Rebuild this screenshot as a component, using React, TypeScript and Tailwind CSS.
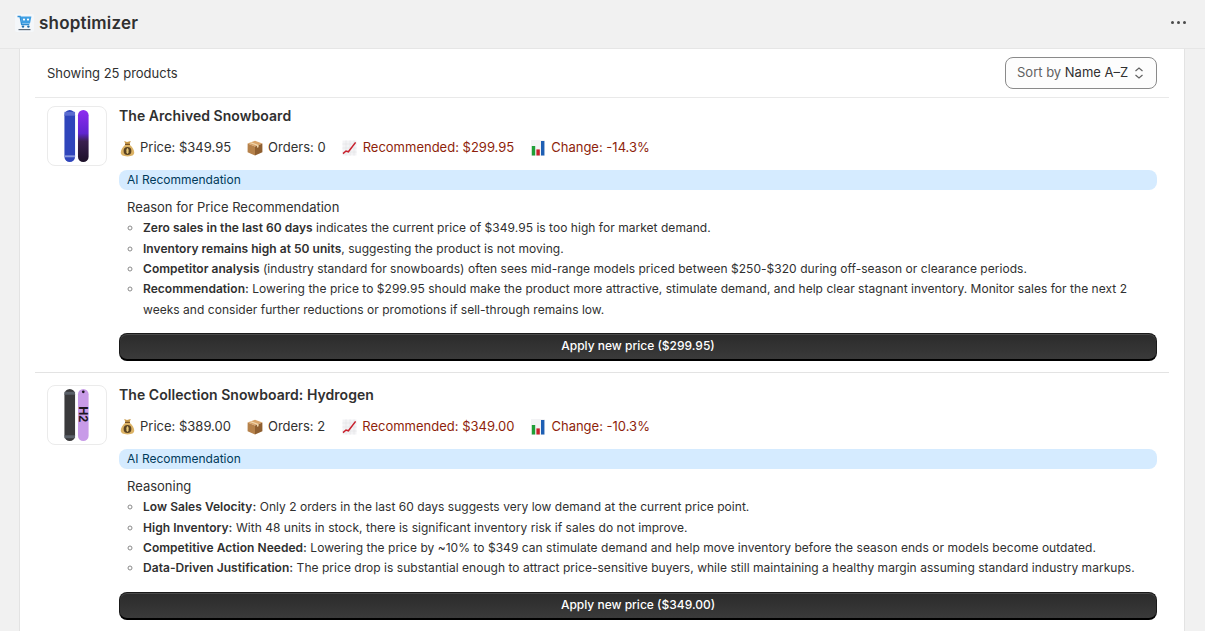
import React from "react";

const Bag = () => (
  <svg width="15" height="17" viewBox="0 0 15 17" className="shrink-0">
    <path d="M4.2 1 L7 2 L10.8 1 L9.4 4.4 L5.6 4.4 Z" fill="#c99a4a" />
    <path d="M5.5 4.6 C2.5 7 .8 10 .8 12.6 C.8 15.2 3 16.4 7.5 16.4 C12 16.4 14.2 15.2 14.2 12.6 C14.2 10 12.5 7 9.5 4.6 Z" fill="#dcb366" />
    <rect x="5" y="3.8" width="5" height="1.2" fill="#7a5426" />
    <circle cx="7.5" cy="11" r="3.9" fill="#5a4322" />
    <rect x="6.9" y="8.3" width="1.2" height="5.4" fill="#e8c878" />
    <rect x="6" y="9.6" width="3" height="1" fill="#e8c878" />
    <rect x="6" y="11.5" width="3" height="1" fill="#e8c878" />
  </svg>
);

const Box = () => (
  <svg width="16" height="16" viewBox="0 0 16 16" className="shrink-0">
    <path d="M8 .8 L15.4 3.6 L8 6.6 L.6 3.6 Z" fill="#d9a469" />
    <path d="M.6 3.6 L8 6.6 L8 15.4 L.6 12.2 Z" fill="#b5814a" />
    <path d="M15.4 3.6 L8 6.6 L8 15.4 L15.4 12.2 Z" fill="#8f5f30" />
    <path d="M4 2.2 L11.6 5 L11.6 7.2 L10 7.8 L10 5.7 L2.6 2.9 Z" fill="#efd6ae" />
  </svg>
);

const Trend = () => (
  <svg width="15" height="16" viewBox="0 0 15 16" className="shrink-0">
    <rect x=".5" y=".5" width="14" height="15" fill="#f3f3f5" />
    <path d="M.5 4h14M.5 8h14M.5 12h14M4 .5v15M8 .5v15M12 .5v15" stroke="#dcdce2" strokeWidth=".5" />
    <path d="M1 13.6 L4 11 L6.4 11.8 L13.6 2.4" fill="none" stroke="#c8202c" strokeWidth="1.5" />
  </svg>
);

const Bars = () => (
  <svg width="14" height="16" viewBox="0 0 14 16" className="shrink-0">
    <rect width="14" height="16" fill="#f3f3f5" />
    <rect x=".8" y="6" width="3.4" height="9.5" fill="#1f9e37" />
    <rect x="5.4" y="9.4" width="3.4" height="6.1" fill="#c8202c" />
    <rect x="10" y="1" width="3.4" height="14.5" fill="#1e5fb4" />
  </svg>
);

const Meta = ({ icon, children, red }: { icon: React.ReactNode; children: React.ReactNode; red?: boolean }) => (
  <div className={`flex items-center gap-[5px] ${red ? "text-[#8e1f0b]" : "text-[#303030]"}`}>
    <span className="flex w-4 justify-center">{icon}</span>
    <span>{children}</span>
  </div>
);

const Board1 = () => (
  <svg width="60" height="58" viewBox="0 0 60 58">
    <defs>
      <linearGradient id="p1" x1="0" y1="0" x2="0" y2="1">
        <stop offset="0" stopColor="#8f2cf0" />
        <stop offset=".45" stopColor="#5f24d0" />
        <stop offset=".6" stopColor="#3a1f50" />
        <stop offset="1" stopColor="#1c1028" />
      </linearGradient>
    </defs>
    <rect x="17" y="2" width="11" height="54" rx="5.5" fill="#2f45bb" />
    <rect x="17" y="4" width="11" height="4" fill="#5a6cd0" />
    <rect x="17" y="49" width="11" height="2" fill="#8796dc" />
    <rect x="31" y="2" width="11" height="54" rx="5.5" fill="url(#p1)" />
  </svg>
);

const Board2 = () => (
  <svg width="60" height="58" viewBox="0 0 60 58">
    <rect x="17" y="2" width="11" height="54" rx="5.5" fill="#3a3a3c" />
    <rect x="17" y="5" width="11" height="3" fill="#5a6068" />
    <rect x="17" y="50" width="11" height="3" fill="#5a6068" />
    <rect x="31" y="2" width="11" height="54" rx="5.5" fill="#c89be8" />
    <text transform="translate(32 20) rotate(90)" fontFamily="Liberation Sans" fontWeight="700" fontSize="13" fill="#1d1520">H2</text>
    <circle cx="36.5" cy="5" r="1.4" fill="#1d1520" />
  </svg>
);

const Product = ({
  title, price, orders, rec, change, heading, items, button, thumb, first,
}: {
  title: string; price: string; orders: number; rec: string; change: string; heading: string;
  items: [string, string][]; button: string; thumb: React.ReactNode; first?: boolean;
}) => (
  <div className={`flex gap-3 px-3 ${first ? "pt-2 pb-[11px] border-b border-[#e3e3e3]" : "pt-3 pb-3"}`}>
    <div className="flex h-[60px] w-[60px] shrink-0 items-center justify-center rounded-lg border border-[#ebebeb] bg-white">
      {thumb}
    </div>
    <div className="min-w-0 flex-1">
      <div className="text-[14px] font-semibold leading-5 tracking-[0.05px] text-[#303030]">{title}</div>
      <div className="mt-3 flex h-5 items-center gap-4 text-[13px]">
        <Meta icon={<Bag />}>Price: {price}</Meta>
        <Meta icon={<Box />}>Orders: {orders}</Meta>
        <Meta icon={<Trend />} red>Recommended: {rec}</Meta>
        <Meta icon={<Bars />} red>Change: {change}</Meta>
      </div>
      <div className="mt-3 flex h-5 items-center rounded-lg bg-[#d5ebff] px-2 text-[12px] text-[#003a5a]">AI Recommendation</div>
      <div className="mt-[7px] px-2">
        <div className="text-[13px] leading-5 text-[#303030]">{heading}</div>
        <ul className="mt-[1.4px] list-[circle] pl-4 text-[12px] leading-[20.3px] tracking-[0.035px] text-[#303030] marker:text-[#8a8a8a]">
          {items.map(([b, t]) => (
            <li key={b}><span className="font-semibold">{b}</span>{t.startsWith(",") ? t : ` ${t}`}</li>
          ))}
        </ul>
      </div>
      <button className="mt-[13.1px] flex h-[28px] w-full items-center justify-center rounded-lg border border-[#1a1a1a] border-b-2 border-b-black bg-gradient-to-b from-[#2b2b2b] to-[#3a3a3a] text-[12px] font-medium text-white shadow-[inset_0_1px_0_#4a4a4a]">
        {button}
      </button>
    </div>
  </div>
);

export default function App() {
  return (
    <div className="h-[631px] w-[1205px] overflow-hidden bg-[#f1f1f1] font-['Inter',sans-serif]">
      <header className="flex h-[49px] items-center justify-between border-b border-[#e6e6e6] pb-[2px] pl-[15px] pr-[19px]">
        <div className="flex items-center gap-[5px]">
          <svg width="19" height="18" viewBox="0 0 19 18">
            <rect width="19" height="18" rx="2" fill="#f4f7fa" />
            <path d="M2.5 2.5h2.6l1.6 8h7.6" fill="none" stroke="#2f8fd6" strokeWidth="1.4" />
            <path d="M5.4 2.6h11l-1.4 6.8H7z" fill="#3f9fe3" />
            <circle cx="9" cy="5.6" r="1.1" fill="#ffffff" />
            <circle cx="13" cy="5.6" r="1.1" fill="#ffffff" />
            <circle cx="8" cy="12.6" r="1.2" fill="#1f6fae" />
            <circle cx="13.4" cy="12.6" r="1.2" fill="#1f6fae" />
            <rect x="3.5" y="15" width="12" height="1.2" fill="#5b6a78" />
          </svg>
          <span className="text-[17px] font-semibold leading-6 tracking-[0.2px] text-[#303030]">shoptimizer</span>
        </div>
        <div className="mb-[1px] flex gap-[3px]">
          <span className="h-[3px] w-[3px] rounded-full bg-[#4a4a4a]" />
          <span className="h-[3px] w-[3px] rounded-full bg-[#4a4a4a]" />
          <span className="h-[3px] w-[3px] rounded-full bg-[#4a4a4a]" />
        </div>
      </header>
      <main className="ml-[19px] h-[582px] w-[1166px] overflow-hidden border-x border-[#e3e3e3] bg-white px-[15px]">
        <div className="flex h-[49px] items-center justify-between border-b border-[#e9e9e9] px-3">
          <span className="mt-px text-[13px] text-[#303030]">Showing 25 products</span>
          <div className="flex h-8 w-[152px] items-center justify-between rounded-lg border border-[#8a8a8a] bg-[#fdfdfd] pl-[11px] pr-[12px] text-[13px]">
            <span><span className="text-[#616161]">Sort by</span> <span className="text-[#303030]">Name A–Z</span></span>
            <svg width="10" height="14" viewBox="0 0 10 14" fill="none" stroke="#616161" strokeWidth="1.2">
              <path d="M1.5 5l3.5-3 3.5 3M1.5 9l3.5 3 3.5-3" />
            </svg>
          </div>
        </div>
        <Product
          first
          title="The Archived Snowboard"
          price="$349.95"
          orders={0}
          rec="$299.95"
          change="-14.3%"
          heading="Reason for Price Recommendation"
          thumb={<Board1 />}
          button="Apply new price ($299.95)"
          items={[
            ["Zero sales in the last 60 days", "indicates the current price of $349.95 is too high for market demand."],
            ["Inventory remains high at 50 units", ", suggesting the product is not moving."],
            ["Competitor analysis", "(industry standard for snowboards) often sees mid-range models priced between $250-$320 during off-season or clearance periods."],
            ["Recommendation:", "Lowering the price to $299.95 should make the product more attractive, stimulate demand, and help clear stagnant inventory. Monitor sales for the next 2 weeks and consider further reductions or promotions if sell-through remains low."],
          ]}
        />
        <Product
          title="The Collection Snowboard: Hydrogen"
          price="$389.00"
          orders={2}
          rec="$349.00"
          change="-10.3%"
          heading="Reasoning"
          thumb={<Board2 />}
          button="Apply new price ($349.00)"
          items={[
            ["Low Sales Velocity:", "Only 2 orders in the last 60 days suggests very low demand at the current price point."],
            ["High Inventory:", "With 48 units in stock, there is significant inventory risk if sales do not improve."],
            ["Competitive Action Needed:", "Lowering the price by ~10% to $349 can stimulate demand and help move inventory before the season ends or models become outdated."],
            ["Data-Driven Justification:", "The price drop is substantial enough to attract price-sensitive buyers, while still maintaining a healthy margin assuming standard industry markups."],
          ]}
        />
      </main>
    </div>
  );
}
